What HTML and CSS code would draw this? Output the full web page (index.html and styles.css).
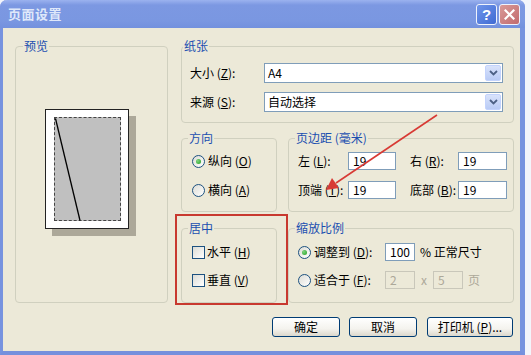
FILE: index.html
```html
<!DOCTYPE html>
<html lang="zh-CN">
<head>
  <meta charset="UTF-8">
  <title>页面设置</title>
  <link rel="stylesheet" href="styles.css">
</head>
<body>
  <div class="window">
    <div class="titlebar">
      <span class="title">页面设置</span>
      <span class="cap-btn help">?</span>
      <span class="cap-btn close">
        <svg width="11" height="11" viewBox="0 0 11 11"><path d="M1.5 1.5 L9.5 9.5 M9.5 1.5 L1.5 9.5" stroke="#fff" stroke-width="2.2" stroke-linecap="square"/></svg>
      </span>
    </div>

    <div class="client">
      <div class="groups">
        <fieldset class="group preview">
          <legend>预览</legend>
          <div class="preview-body">
            <div class="sheet">
              <div class="printable">
                <svg width="66" height="103" viewBox="0 0 66 103"><line x1="0.5" y1="0.5" x2="25" y2="102.5" stroke="#000" stroke-width="1.3"/></svg>
              </div>
            </div>
          </div>
        </fieldset>

        <div class="right-col">
          <fieldset class="group paper">
            <legend>纸张</legend>
            <div class="paper-body">
              <span>大小 (<u>Z</u>):</span>
              <div class="combo"><span class="combo-text">A4</span><span class="drop"><svg width="9" height="6" viewBox="0 0 9 6"><path d="M1 1 L4.5 4.5 L8 1" fill="none" stroke="#4d6185" stroke-width="1.8"/></svg></span></div>
              <span>来源 (<u>S</u>):</span>
              <div class="combo"><span class="combo-text">自动选择</span><span class="drop"><svg width="9" height="6" viewBox="0 0 9 6"><path d="M1 1 L4.5 4.5 L8 1" fill="none" stroke="#4d6185" stroke-width="1.8"/></svg></span></div>
            </div>
          </fieldset>

          <div class="pair">
            <fieldset class="group">
              <legend>方向</legend>
              <div class="opt-body">
                <div class="opt"><span class="radio checked"></span>纵向 (<u>O</u>)</div>
                <div class="opt"><span class="radio"></span>横向 (<u>A</u>)</div>
              </div>
            </fieldset>
            <fieldset class="group">
              <legend>页边距 (毫米)</legend>
              <div class="margin-body">
                <span>左 (<u>L</u>):</span>
                <span class="field">19</span>
                <span class="lbl-r">右 (<u>R</u>):</span>
                <span class="field">19</span>
                <span>顶端 (<u>T</u>):</span>
                <span class="field">19</span>
                <span class="lbl-r">底部 (<u>B</u>):</span>
                <span class="field">19</span>
              </div>
            </fieldset>
          </div>

          <div class="pair">
            <fieldset class="group">
              <legend>居中</legend>
              <div class="center-body">
                <div class="opt"><span class="check"></span>水平 (<u>H</u>)</div>
                <div class="opt"><span class="check"></span>垂直 (<u>V</u>)</div>
              </div>
            </fieldset>
            <fieldset class="group">
              <legend>缩放比例</legend>
              <div class="center-body scale-body">
                <div class="opt">
                  <span class="radio checked"></span><span class="scale-lbl">调整到 (<u>D</u>):</span>
                  <span class="field small">100</span><span class="unit">% 正常尺寸</span>
                </div>
                <div class="opt">
                  <span class="radio"></span><span class="scale-lbl">适合于 (<u>F</u>):</span>
                  <span class="field small off">2</span><span class="times">x</span><span class="field small off">5</span><span class="unit off-text">页</span>
                </div>
              </div>
            </fieldset>
          </div>
        </div>
      </div>

      <div class="buttons">
        <span class="btn">确定</span>
        <span class="btn">取消</span>
        <span class="btn wide">打印机 (<u>P</u>)...</span>
      </div>

      <div class="mark"></div>
      <svg class="arrow" width="531" height="355" viewBox="0 0 531 355">
        <line x1="437" y1="115" x2="336" y2="183" stroke="#d83a34" stroke-width="1.6"/>
        <path d="M326 190 L332 178 L339 188 Z" fill="#d83a34"/>
      </svg>
    </div>
  </div>
</body>
</html>
```

FILE: styles.css
```css
* {
  box-sizing: border-box;
}

body {
  margin: 0;
  background: #f3f5fb;
  font-family: "Noto Sans CJK SC", "Liberation Sans", sans-serif;
  font-size: 12px;
  line-height: 14px;
  color: #000;
}

u {
  text-decoration: underline;
  text-underline-offset: 1px;
}

.window {
  width: 525px;
  height: 355px;
  background: #ece9d8;
  border-left: 3px solid #7793df;
  border-right: 5px solid #7793df;
  border-bottom: 4px solid #7590dd;
  border-radius: 7px 7px 0 0;
  display: flex;
  flex-direction: column;
}

.titlebar {
  height: 28px;
  margin: 0 -5px 0 -3px;
  padding: 0 5px 0 8px;
  border-radius: 7px 7px 0 0;
  background: linear-gradient(#9bb2ef, #7c98e2 18%, #7a97e1 75%, #7391de);
  display: flex;
  align-items: center;
  gap: 2px;
}

.title {
  flex: 1;
  color: #dfe8fa;
  font-size: 13px;
  font-weight: bold;
  letter-spacing: 0.5px;
}

.cap-btn {
  width: 21px;
  height: 21px;
  border: 1px solid #eef2fc;
  border-radius: 3px;
  display: flex;
  align-items: center;
  justify-content: center;
  color: #fff;
  font: bold 15px "Liberation Sans", sans-serif;
}

.help {
  background: linear-gradient(135deg, #6f95ea, #3f6ad3);
}

.close {
  background: linear-gradient(135deg, #d99a98, #c26b6e);
}

.client {
  flex: 1;
  position: relative;
  padding: 11px 6px 13px 12px;
  display: flex;
  flex-direction: column;
}

.groups {
  display: grid;
  grid-template-columns: 153px 333px;
  column-gap: 13px;
}

.group {
  margin: 0;
  padding: 0;
  border: 1px solid #d0d0bf;
  border-radius: 4px;
  min-width: 0;
}

.group legend {
  margin-left: 6px;
  padding: 0 1px;
  color: #1b4fb0;
}

.paper legend {
  margin-left: 1px;
}

.preview legend {
  margin-left: 7px;
}

.preview-body {
  padding: 56px 0 0 29px;
}

.sheet {
  width: 84px;
  height: 120px;
  background: #fff;
  border: 1px solid #222;
  box-shadow: 7px 7px 0 #aca899;
  padding: 7px 7px 7px 8px;
}

.printable {
  width: 67px;
  height: 104px;
  background: #c0c0c0;
  border: 1px dashed #444;
}

.printable svg {
  display: block;
}

.right-col {
  display: flex;
  flex-direction: column;
}

.paper-body {
  display: grid;
  grid-template-columns: 74px 1fr;
  row-gap: 9px;
  align-items: center;
  padding: 10px 10px 10px 8px;
}

.combo {
  height: 20px;
  background: #fff;
  border: 1px solid #7f9db9;
  display: flex;
  align-items: center;
  padding: 0 1px 0 3px;
}

.combo-text {
  flex: 1;
}

.drop {
  width: 16px;
  height: 16px;
  border: 1px solid #c3d3fd;
  border-radius: 2px;
  background: linear-gradient(#d9e3fb, #b9cbf5);
  display: flex;
  align-items: center;
  justify-content: center;
}

.pair {
  display: grid;
  grid-template-columns: 96px 226px;
  column-gap: 11px;
  margin-top: 8px;
}

.pair + .pair {
  margin-top: 9px;
}

.opt-body {
  display: flex;
  flex-direction: column;
  gap: 9px;
  padding: 6px 0 11px 10px;
}

.opt {
  height: 20px;
  display: flex;
  align-items: center;
}

.radio {
  width: 13px;
  height: 13px;
  margin-right: 3px;
  border: 1px solid #1c5180;
  border-radius: 50%;
  background: linear-gradient(135deg, #dcdcd5, #fff);
  display: flex;
  align-items: center;
  justify-content: center;
}

.radio.checked::after {
  content: "";
  width: 5px;
  height: 5px;
  border-radius: 50%;
  background: radial-gradient(circle at 35% 35%, #7ed37e, #21a121);
}

.check {
  width: 13px;
  height: 13px;
  margin-right: 2px;
  border: 1px solid #1c5180;
  background: linear-gradient(135deg, #dcdcd5, #fff);
}

.margin-body {
  display: grid;
  grid-template-columns: 50px 48px 62px 49px;
  grid-auto-rows: 18px;
  row-gap: 11px;
  align-items: center;
  padding: 7px 0 12px 9px;
}

.lbl-r {
  padding-left: 14px;
}

.field {
  height: 18px;
  background: #fff;
  border: 1px solid #7f9db9;
  padding: 1px 0 0 4px;
}

.center-body {
  display: flex;
  flex-direction: column;
  gap: 10px;
  padding: 8px 0 13px 10px;
}

.center-body .opt {
  height: 18px;
}

.scale-body {
  padding-left: 9px;
}

.scale-lbl {
  width: 71px;
}

.field.small {
  width: 30px;
}

.field.off {
  background: #ece9d8;
  border-color: #c9c7ba;
  color: #aca899;
}

.times {
  width: 18px;
  text-align: center;
  color: #aca899;
}

.unit {
  margin-left: 5px;
}

.off-text {
  color: #aca899;
}

.buttons {
  display: flex;
  justify-content: flex-end;
  gap: 9px;
  margin-top: 14px;
  padding-right: 1px;
}

.btn {
  width: 68px;
  height: 20px;
  border: 1px solid #003c74;
  border-radius: 3px;
  background: linear-gradient(#fff, #f4f3ee 60%, #dcd8cc);
  display: flex;
  align-items: center;
  justify-content: center;
}

.btn.wide {
  width: 86px;
  margin-left: 1px;
}

.mark {
  position: absolute;
  left: 172px;
  top: 186px;
  width: 113px;
  height: 91px;
  border: 2px solid #c8392f;
}

.arrow {
  position: absolute;
  left: -3px;
  top: -28px;
  pointer-events: none;
}
```
